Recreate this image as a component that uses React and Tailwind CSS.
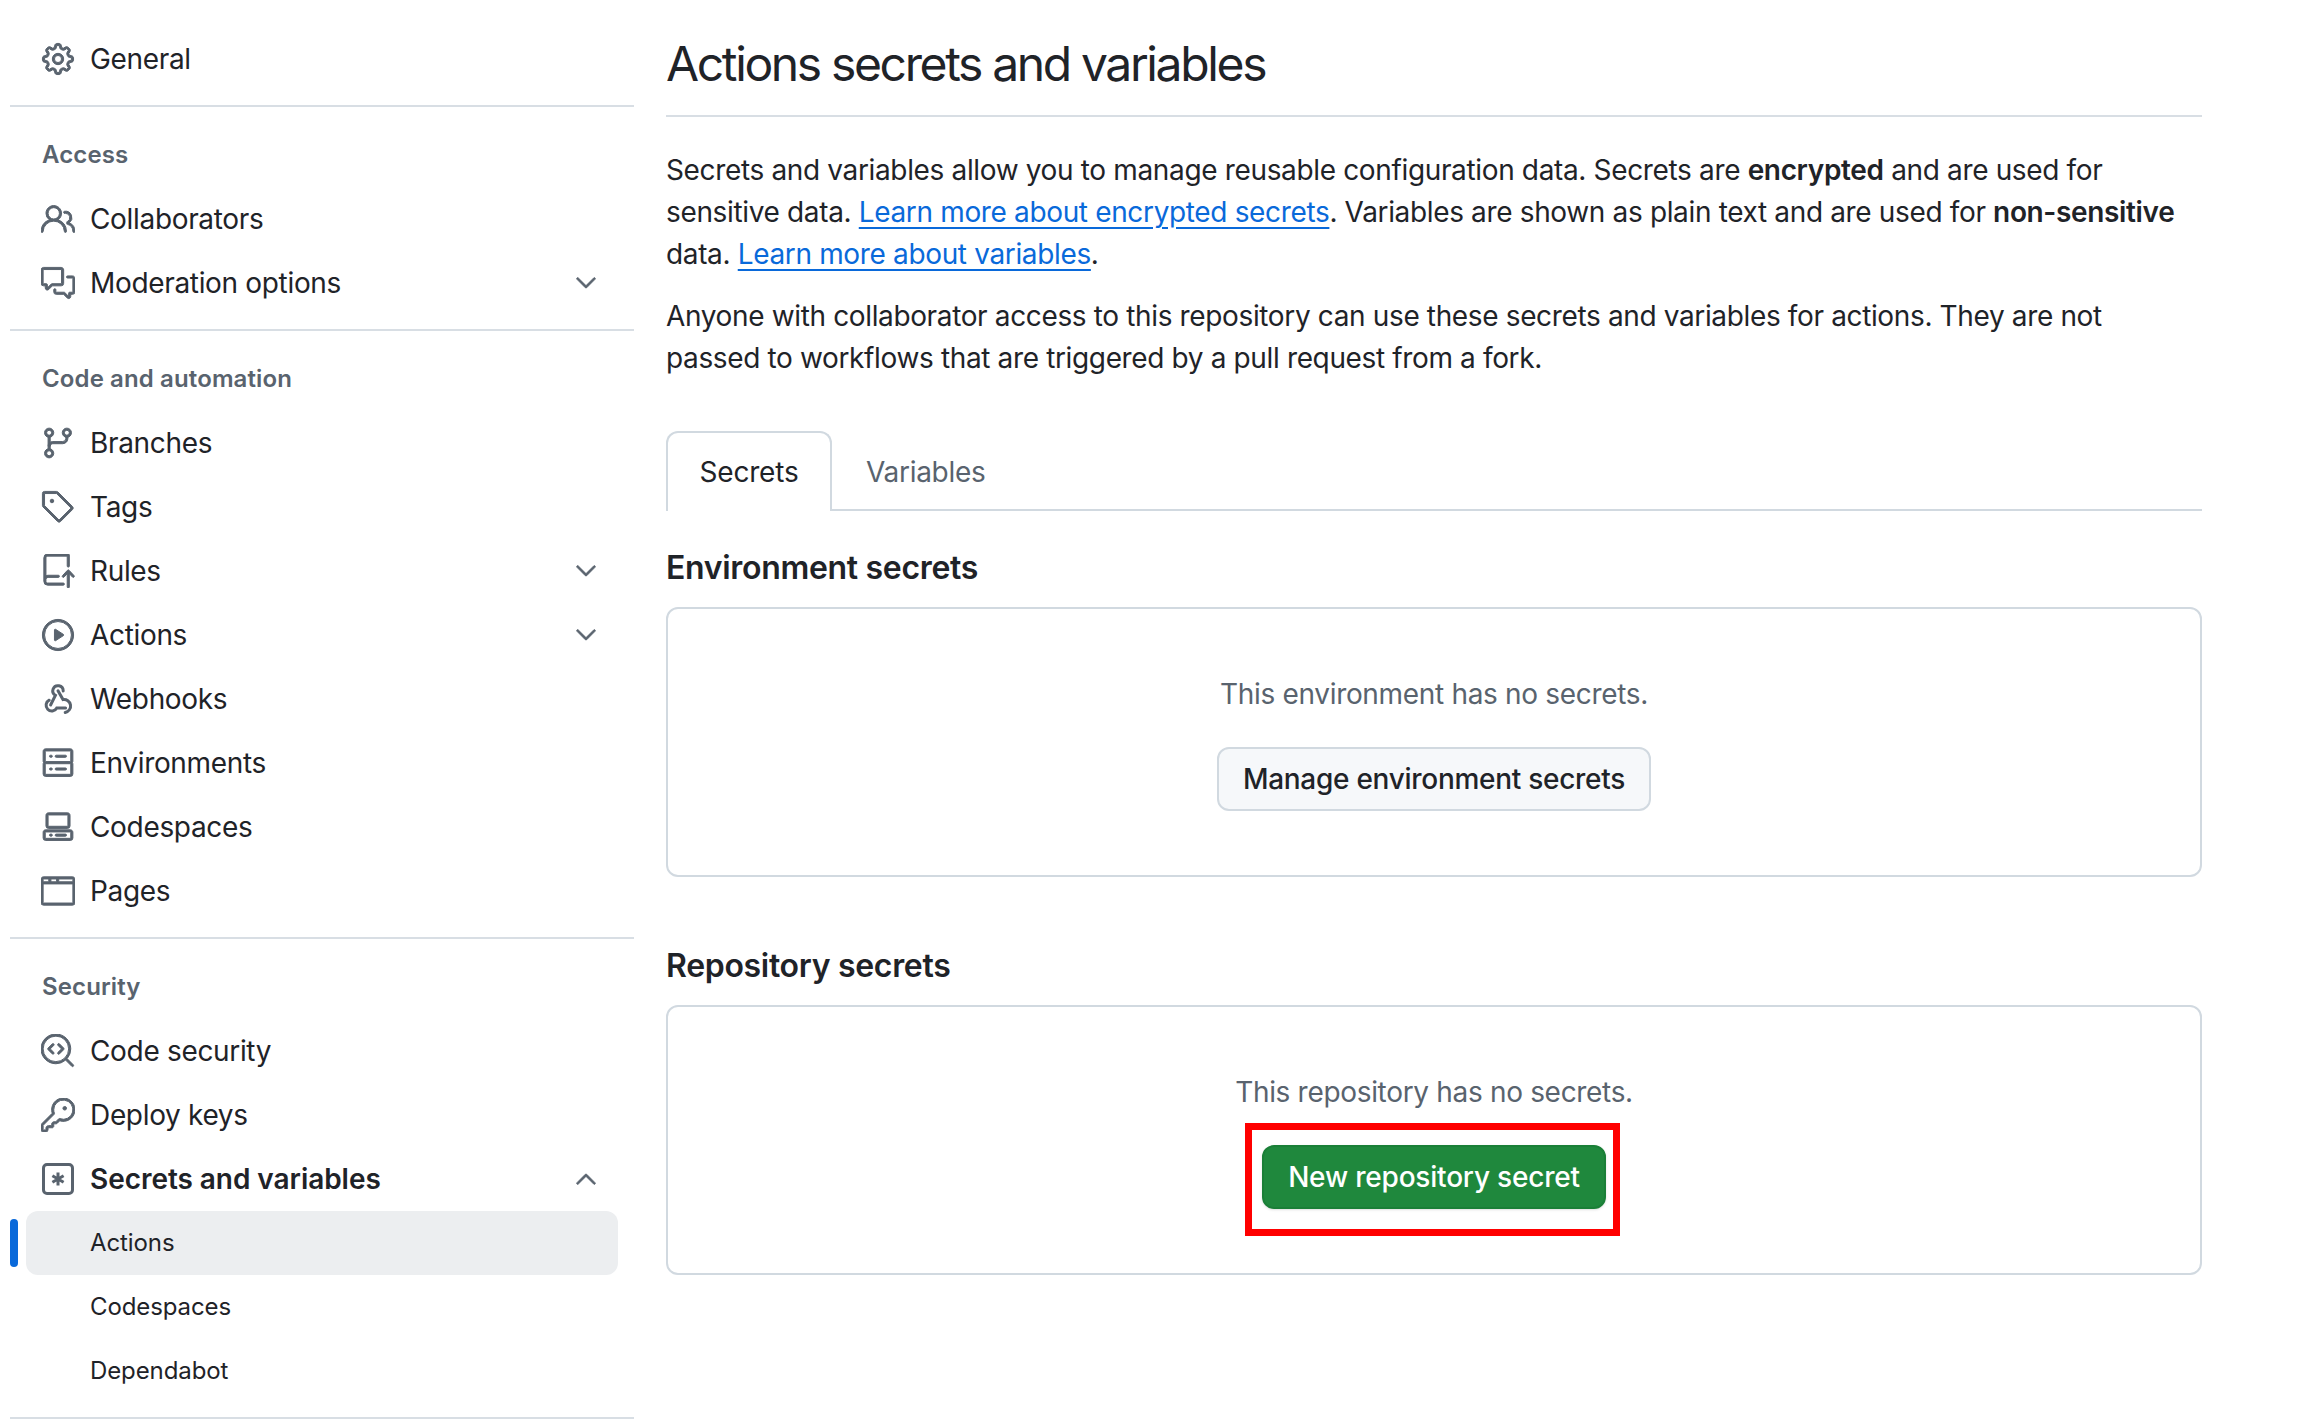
import React from 'react';
import {
  GoGear, GoPeople, GoCommentDiscussion, GoGitBranch, GoTag, GoRepoPush, GoPlay,
  GoServer, GoCodespaces, GoBrowser, GoCodescan, GoKey, GoChevronDown, GoChevronUp,
} from 'react-icons/go';

const WebhookIcon = ({ className }) => (
  <svg viewBox="-0.5 -0.5 17 17" fill="none" stroke="currentColor" strokeLinecap="round" className={className}>
    <path strokeWidth="1.5" d="M10.6 4a2.6 2.6 0 1 0-3.9 2.2L4.3 11" />
    <path strokeWidth="1.5" d="M3.6 8.6a2.85 2.85 0 1 0 3.8 3.9h4.4" />
    <path strokeWidth="1.5" d="M8 3.9l2.5 4.4a2.85 2.85 0 1 1 1.1 6.4" />
  </svg>
);

const KeyAsteriskIcon = ({ className }) => (
  <svg viewBox="-0.5 -0.5 17 17" fill="none" stroke="currentColor" className={className}>
    <rect x="0.75" y="0.75" width="14.5" height="14.5" rx="1.75" strokeWidth="1.5" />
    <path d="M8 4.75v6.5M5.2 6.4l5.6 3.2M10.8 6.4l-5.6 3.2" strokeWidth="1.5" />
  </svg>
);

const NavItem = ({ icon: Icon, label, chevron, bold }) => (
  <div className="h-[64px] mx-[16px] pl-[16px] flex items-center text-[28px] text-[#1f2328]">
    <Icon className="w-[34px] h-[34px] -mx-[1px] text-[#59636e] stroke-current stroke-[0.7] shrink-0" />
    <span className={`ml-[16px] ${bold ? 'font-semibold tracking-[-0.05px]' : 'tracking-[-0.33px]'}`}>{label}</span>
    {chevron === 'down' && <GoChevronDown className="ml-auto mr-[16px] w-[32px] h-[32px] text-[#59636e] stroke-current stroke-[0.6]" />}
    {chevron === 'up' && <GoChevronUp className="ml-auto mr-[16px] w-[32px] h-[32px] text-[#59636e] stroke-current stroke-[0.6]" />}
  </div>
);

const SubItem = ({ label, active }) => (
  <div className="relative h-[64px]">
    {active && <div className="absolute left-0 top-[8px] w-[8px] h-[48px] rounded-[6px] bg-[#0969da]" />}
    <div className={`h-[64px] mx-[16px] pl-[64px] flex items-center text-[24px] tracking-[-0.1px] text-[#1f2328] rounded-[12px] ${active ? 'bg-[#eceef0]' : ''}`}>
      {label}
    </div>
  </div>
);

const Divider = () => <div className="h-[2px] mt-[14px] bg-[#d8dee4]" />;

const GroupTitle = ({ children }) => (
  <div className="h-[64px] mt-[16px] pl-[32px] flex items-center text-[24px] tracking-[0.12px] font-semibold text-[#59636e]">{children}</div>
);

const Sidebar = () => (
  <nav className="w-[624px] shrink-0 pt-[27px]">
    <NavItem icon={GoGear} label="General" />
    <Divider />
    <GroupTitle>Access</GroupTitle>
    <NavItem icon={GoPeople} label="Collaborators" />
    <NavItem icon={GoCommentDiscussion} label="Moderation options" chevron="down" />
    <Divider />
    <GroupTitle>Code and automation</GroupTitle>
    <NavItem icon={GoGitBranch} label="Branches" />
    <NavItem icon={GoTag} label="Tags" />
    <NavItem icon={GoRepoPush} label="Rules" chevron="down" />
    <NavItem icon={GoPlay} label="Actions" chevron="down" />
    <NavItem icon={WebhookIcon} label="Webhooks" />
    <NavItem icon={GoServer} label="Environments" />
    <NavItem icon={GoCodespaces} label="Codespaces" />
    <NavItem icon={GoBrowser} label="Pages" />
    <Divider />
    <GroupTitle>Security</GroupTitle>
    <NavItem icon={GoCodescan} label="Code security" />
    <NavItem icon={GoKey} label="Deploy keys" />
    <NavItem icon={KeyAsteriskIcon} label="Secrets and variables" chevron="up" bold />
    <SubItem label="Actions" active />
    <SubItem label="Codespaces" />
    <SubItem label="Dependabot" />
    <Divider />
  </nav>
);

const Link = ({ children }) => (
  <a href="#" className="text-[#0969da] underline underline-offset-[5px]">{children}</a>
);

export default function App() {
  return (
    <div className="h-[1428px] overflow-hidden bg-white flex pl-[10px] font-['Inter',sans-serif] text-[#1f2328]">
      <Sidebar />
      <main className="ml-[32px] w-[1536px] pt-[34px]">
        <h1 className="text-[48px] leading-[60px] font-normal tracking-[-2.36px] pb-[21px] border-b-2 border-[#d8dee4]">
          Actions secrets and variables
        </h1>
        <p className="mt-[32px] text-[28px] leading-[42px] tracking-[-0.35px]">
          Secrets and variables allow you to manage reusable configuration data. Secrets are <b className="font-semibold">encrypted</b> and are used for sensitive data. <Link>Learn more about encrypted secrets</Link>. Variables are shown as plain text and are used for <b className="font-semibold whitespace-nowrap">non-sensitive</b> data. <Link>Learn more about variables</Link>.
        </p>
        <p className="mt-[20px] text-[28px] leading-[42px] tracking-[-0.36px]">
          Anyone with collaborator access to this repository can use these secrets and variables for actions. They are not<br />passed to workflows that are triggered by a pull request from a fork.
        </p>

        <div className="mt-[52px] flex border-b-2 border-[#d1d9e0] h-[80px]">
          <div className="h-[80px] w-[166px] flex items-center justify-center border-2 border-b-0 border-[#d1d9e0] rounded-t-[12px] bg-white text-[28px] tracking-[-0.2px]">Secrets</div>
          <div className="h-[80px] pt-[2px] ml-[34px] flex items-center text-[28px] tracking-[-0.3px] text-[#59636e]">Variables</div>
        </div>

        <h2 className="mt-[33px] text-[32px] leading-[48px] tracking-[-0.31px] font-semibold">Environment secrets</h2>
        <section className="mt-[15px] h-[270px] border-2 border-[#d1d9e0] rounded-[12px] pt-[64px] flex flex-col items-center">
          <p className="text-[28px] leading-[42px] tracking-[-0.32px] text-[#59636e]">This environment has no secrets.</p>
          <button className="mt-[32px] h-[64px] px-[24px] rounded-[12px] border-2 border-[#d1d9e0] bg-[#f6f8fa] text-[28px] tracking-[-0.28px] font-medium">Manage environment secrets</button>
        </section>

        <h2 className="mt-[65px] text-[32px] leading-[48px] tracking-[-0.31px] font-semibold">Repository secrets</h2>
        <section className="mt-[15px] h-[270px] border-2 border-[#d1d9e0] rounded-[12px] pt-[64px] flex flex-col items-center">
          <p className="text-[28px] leading-[42px] tracking-[-0.32px] text-[#59636e]">This repository has no secrets.</p>
          <div className="relative mt-[32px]">
            <button className="h-[64px] px-[24px] rounded-[12px] border-2 border-[#1a7f37] bg-[#1f883d] text-white text-[28px] tracking-[-0.2px] font-medium shadow-sm">New repository secret</button>
            <div className="absolute left-[-17px] right-[-14px] top-[-22px] bottom-[-27px] border-[7px] border-[#ff0000]" />
          </div>
        </section>
      </main>
    </div>
  );
}
